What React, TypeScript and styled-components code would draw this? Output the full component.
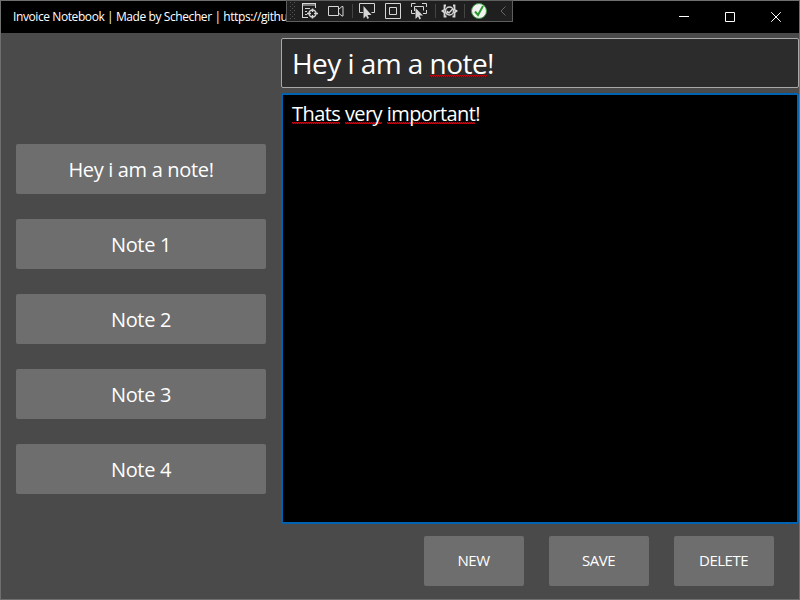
import React from 'react';
import styled, { createGlobalStyle } from 'styled-components';

const Global = createGlobalStyle`
  * { box-sizing: border-box; }
  body { margin: 0; background: #4a4a4a; overflow: hidden; }
  button { font: inherit; }
`;

const Window = styled.div`
  width: 800px;
  height: 600px;
  border: 1px solid #6f6f6f;
  background: #4a4a4a;
  color: #fff;
  font-family: 'Open Sans', 'Noto Sans', sans-serif;
  display: flex;
  flex-direction: column;
  position: relative;
`;

const TitleBar = styled.header`
  height: 32px;
  flex: none;
  background: #000;
  display: flex;
  justify-content: space-between;
`;

const Title = styled.div`
  width: 286px;
  padding-left: 12px;
  white-space: nowrap;
  font-size: 12px;
  line-height: 31px;
  letter-spacing: -0.41px;
`;

const Controls = styled.div`
  display: flex;
`;

const ControlButton = styled.button`
  width: 46px;
  height: 32px;
  padding: 0;
  border: 0;
  background: transparent;
  display: flex;
`;

const DebugBar = styled.div`
  position: absolute;
  left: 285px;
  top: -1px;
  width: 227px;
  height: 22px;
  background: #1f1f1f;
  border: 1px solid #5e5e5e;
  svg { display: block; margin: -1px; }
`;

const Body = styled.main`
  flex: 1;
  display: flex;
`;

const Sidebar = styled.nav`
  width: 280px;
  flex: none;
  padding: 111px 0 0 15px;
  display: flex;
  flex-direction: column;
  gap: 25px;
`;

const FlatButton = styled.button`
  border: 0;
  padding: 0 1px 2px 0;
  height: 50px;
  border-radius: 2px;
  background: #6e6e6e;
  color: #fff;
`;

const NoteButton = styled(FlatButton)`
  width: 250px;
  font-size: 20px;
  letter-spacing: -0.33px;
  padding: 0;
`;

const Editor = styled.section`
  flex: 1;
  display: flex;
  flex-direction: column;
  padding-top: 5px;
`;

const Heading = styled.div`
  height: 50px;
  border: 1px solid #a8a8a8;
  border-radius: 2px;
  background: #2c2c2c;
  padding-left: 10px;
  font-size: 28px;
  line-height: 48px;
  letter-spacing: -0.55px;
  white-space: pre;
`;

const Content = styled.div`
  height: 431px;
  margin-top: 5px;
  border: 2px solid #0063b1;
  border-radius: 2px;
  background: #000;
  padding: 5px 9px;
  font-size: 20px;
  line-height: 28px;
  letter-spacing: -0.56px;
  white-space: pre;
`;

const Misspelled = styled.span<{ $line: number }>`
  display: inline-block;
  background:
    repeating-linear-gradient(90deg, #d0000f 0 1px, #70000a 1px 2px) 0 ${p => p.$line}px / 100% 1px no-repeat,
    repeating-linear-gradient(90deg, #70000a 0 1px, #d0000f 1px 2px) 0 ${p => p.$line + 1}px / 100% 1px no-repeat;
`;

const Actions = styled.footer`
  display: flex;
  justify-content: flex-end;
  gap: 25px;
  padding: 12px 25px 0 0;
`;

const ActionButton = styled(FlatButton)`
  width: 100px;
  font-size: 15px;
  letter-spacing: -0.5px;
`;

const notes = ['Hey i am a note!', 'Note 1', 'Note 2', 'Note 3', 'Note 4'];
const dots = Array.from({ length: 9 }, (_, i) => i);

const DebugIcons = () => (
  <svg width="227" height="22" viewBox="286 0 227 22" fill="none" stroke="#d6d6d6">
    <g fill="#555" stroke="none" shapeRendering="crispEdges">
      {dots.map(i => (
        <React.Fragment key={i}>
          <rect x={290 + (i % 2) * 2} y={2 + i * 2} width="1" height="1" />
          <rect x={294} y={2 + i * 2} width="1" height="1" fillOpacity={i % 2 ? 0 : 1} />
        </React.Fragment>
      ))}
    </g>
    <path d="M302 3.500h14M302 5h14M302.500 3v14M302 17.500h6M315.500 4v4M305 8.500h5M305 11.500h2M305 14.500h2" />
    <circle cx="312.500" cy="13.500" r="3.500" strokeWidth="1.400" />
    <path d="M312.500 8.500v3.500M312.500 15v3.500M307 13.500h4M314 13.500h4" strokeWidth="1.400" />
    <path d="M328.500 6.500h10v9h-10zM338.500 9.500l3.500-3h1v9.500h-1l-3.500-3" />
    <path d="M352.500 4v14M435.500 4v14M464.500 4v14" stroke="#444" />
    <path d="M363 12.500h-3.500v-9h15v9h-3" />
    <path d="M363.500 6v12.500l2.500-2.500 1.500 3 1.500-1-1.500-3h4z" fill="#d6d6d6" stroke="none" />
    <path d="M385.500 3.500h15v15h-15zM389.500 7.500h7v7h-7z" />
    <path d="M411.500 7V3.500h4M422 3.500h4.500V7M426.500 10v3.500H423M415 13.500h-3.500V10M414.500 11V6.500h9v4" />
    <path d="M415.500 8v11l2.500-2.500 1.500 3 1.500-1-1.500-3h3.500z" fill="#d6d6d6" stroke="none" />
    <path d="M446 5.500h-1.500v4l-2 1.500 2 1.500v4h2M453 5.500h1.500v4l2 1.500-2 1.500v4h-2" strokeWidth="1.800" />
    <circle cx="449.500" cy="11" r="4" strokeWidth="1.500" />
    <path d="M447 11l2 2 4-4.500M446 14l2-2" strokeWidth="1.400" />
    <circle cx="479" cy="11" r="7.500" fill="#f2f2f2" stroke="#3f9b40" />
    <path d="M475 11.500l3 3.500 5-9" stroke="#289b2d" strokeWidth="2" />
    <path d="M505.500 6.500l-4.500 4.500 4.500 4.500" stroke="#666" />
  </svg>
);

export default function App() {
  return (
    <>
      <Global />
      <Window>
        <TitleBar>
          <Title>Invoice Notebook | Made by Schecher | https://githu</Title>
          <Controls>
            <ControlButton aria-label="Minimize">
              <svg width="46" height="32" stroke="#fff"><path d="M18 15.500h10" /></svg>
            </ControlButton>
            <ControlButton aria-label="Maximize">
              <svg width="46" height="32" stroke="#fff" fill="none"><path d="M18.500 11.500h9v9h-9z" /></svg>
            </ControlButton>
            <ControlButton aria-label="Close">
              <svg width="46" height="32" stroke="#fff"><path d="M18.200 11.200l9.600 9.600M27.800 11.200l-9.600 9.600" /></svg>
            </ControlButton>
          </Controls>
        </TitleBar>
        <DebugBar><DebugIcons /></DebugBar>
        <Body>
          <Sidebar>
            {notes.map(n => <NoteButton key={n}>{n}</NoteButton>)}
          </Sidebar>
          <Editor>
            <Heading>Hey i am a <Misspelled $line={36}>note</Misspelled>!</Heading>
            <Content>
              <Misspelled $line={22}>Thats</Misspelled> <Misspelled $line={22}>very</Misspelled>{' '}
              <Misspelled $line={22}>important</Misspelled>!
            </Content>
            <Actions>
              <ActionButton>NEW</ActionButton>
              <ActionButton>SAVE</ActionButton>
              <ActionButton>DELETE</ActionButton>
            </Actions>
          </Editor>
        </Body>
      </Window>
    </>
  );
}
